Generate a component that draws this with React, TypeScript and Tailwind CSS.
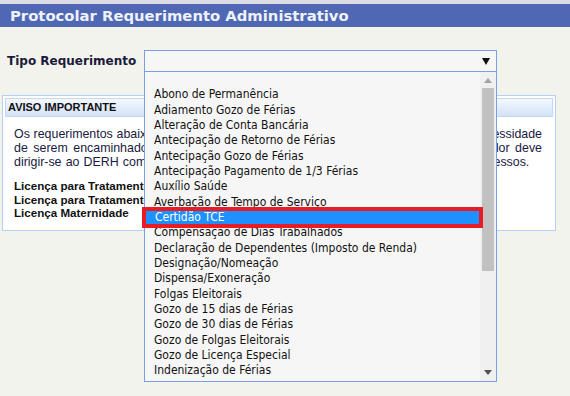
import React from "react";

const items = [
  "Abono de Permanência",
  "Adiamento Gozo de Férias",
  "Alteração de Conta Bancária",
  "Antecipação de Retorno de Férias",
  "Antecipação Gozo de Férias",
  "Antecipação Pagamento de 1/3 Férias",
  "Auxílio Saúde",
  "Averbação de Tempo de Serviço",
  "Certidão TCE",
  "Compensação de Dias Trabalhados",
  "Declaração de Dependentes (Imposto de Renda)",
  "Designação/Nomeação",
  "Dispensa/Exoneração",
  "Folgas Eleitorais",
  "Gozo de 15 dias de Férias",
  "Gozo de 30 dias de Férias",
  "Gozo de Folgas Eleitorais",
  "Gozo de Licença Especial",
  "Indenização de Férias",
];

export default function App() {
  return (
    <div className="w-[570px] h-[396px] overflow-hidden bg-[#f3f3ee] font-['DejaVu_Sans',sans-serif]">
      <div className="h-[4px] bg-[#dddbe7]" />
      <div className="h-[23px] bg-[#5068b3] pl-[10px] text-[#eef2fb] font-bold text-[14.8px] leading-[23px] whitespace-nowrap">
        Protocolar Requerimento Administrativo
      </div>

      <div className="flex items-center mt-[23px] h-[22px]">
        <div className="w-[144px] pl-[7px] font-bold text-[12px] text-[#1c1a3a] whitespace-nowrap">
          Tipo Requerimento
        </div>
        <div className="relative w-[353px] h-[22px] border border-[#7b9fe2] bg-[#f6f6f6] z-10">
          <svg className="absolute right-[6px] top-[7px]" width="8" height="7" viewBox="0 0 8 7">
            <path d="M0 0 H8 L4 7 Z" fill="#111" />
          </svg>
          <div className="absolute left-[-1px] top-[21px] w-[353px] h-[310px] border border-t-0 border-[#7b9fe2] bg-[#f6f6f6] flex font-['DejaVu_Sans_Condensed','DejaVu_Sans',sans-serif] text-[12px] text-[#111]">
            <div className="flex-1 flex flex-col">
              <div className="h-[15.33px]" />
              {items.map((it) =>
                it === "Certidão TCE" ? (
                  <div
                    key={it}
                    className="relative h-[15.33px] leading-[15.33px] pl-[9px] ml-[1px] bg-[#1e90ff] text-white whitespace-nowrap"
                  >
                    {it}
                    <div className="absolute left-[-4px] right-[-3px] top-[-3px] bottom-[-3px] border-[4px] border-t-[4px] border-[#e81c24]" />
                  </div>
                ) : (
                  <div key={it} className="h-[15.33px] leading-[15.33px] pl-[9px] whitespace-nowrap">
                    {it}
                  </div>
                )
              )}
            </div>
            <div className="w-[16px] bg-[#f0f0f0] flex flex-col items-center">
              <div className="h-[16px] flex items-center justify-center">
                <svg width="8" height="5" viewBox="0 0 8 5">
                  <path d="M0 5 L4 0 L8 5 Z" fill="#a3a3a3" />
                </svg>
              </div>
              <div className="w-[12px] h-[183px] bg-[#c1c1c1]" />
              <div className="flex-1" />
              <div className="h-[18px] flex items-center justify-center">
                <svg width="8" height="5" viewBox="0 0 8 5">
                  <path d="M0 0 L8 0 L4 5 Z" fill="#505050" />
                </svg>
              </div>
            </div>
          </div>
        </div>
      </div>

      <div className="mt-[23px] ml-[2px] w-[554px] h-[136px] border border-[#b7cff0] bg-white p-[2px]">
        <div className="h-[19px] border border-[#c5d8f3] bg-gradient-to-b from-[#f3f8fe] to-[#d3e2f7] pl-[2px] font-['Liberation_Sans',sans-serif] font-bold text-[11px] leading-[17px] text-[#111]">
          AVISO IMPORTANTE
        </div>
        <div className="pl-[9px] pr-[11px] pt-[11px] font-['Liberation_Sans',sans-serif] text-[12.4px] text-[#1a1a40]">
          <div className="leading-[13.8px]">
            <div className="text-justify [text-align-last:justify] whitespace-nowrap overflow-hidden">
              Os requerimentos abaixo relacionados, por determinação da Administração, têm a necessidade
            </div>
            <div className="text-justify [text-align-last:justify] whitespace-nowrap overflow-hidden">
              de serem encaminhados diretamente ao setor responsável, razão pela qual o servidor deve
            </div>
            <div className="whitespace-nowrap [word-spacing:0.7px]">
              dirigir-se ao DERH com os documentos necessários para a abertura de todos os processos.
            </div>
          </div>
          <div className="mt-[10px] font-bold text-[11.6px] leading-[13.4px] text-[#111]">
            <div>Licença para Tratamento de Saúde</div>
            <div>Licença para Tratamento de Pessoa da Família</div>
            <div>Licença Maternidade</div>
          </div>
        </div>
      </div>
    </div>
  );
}
